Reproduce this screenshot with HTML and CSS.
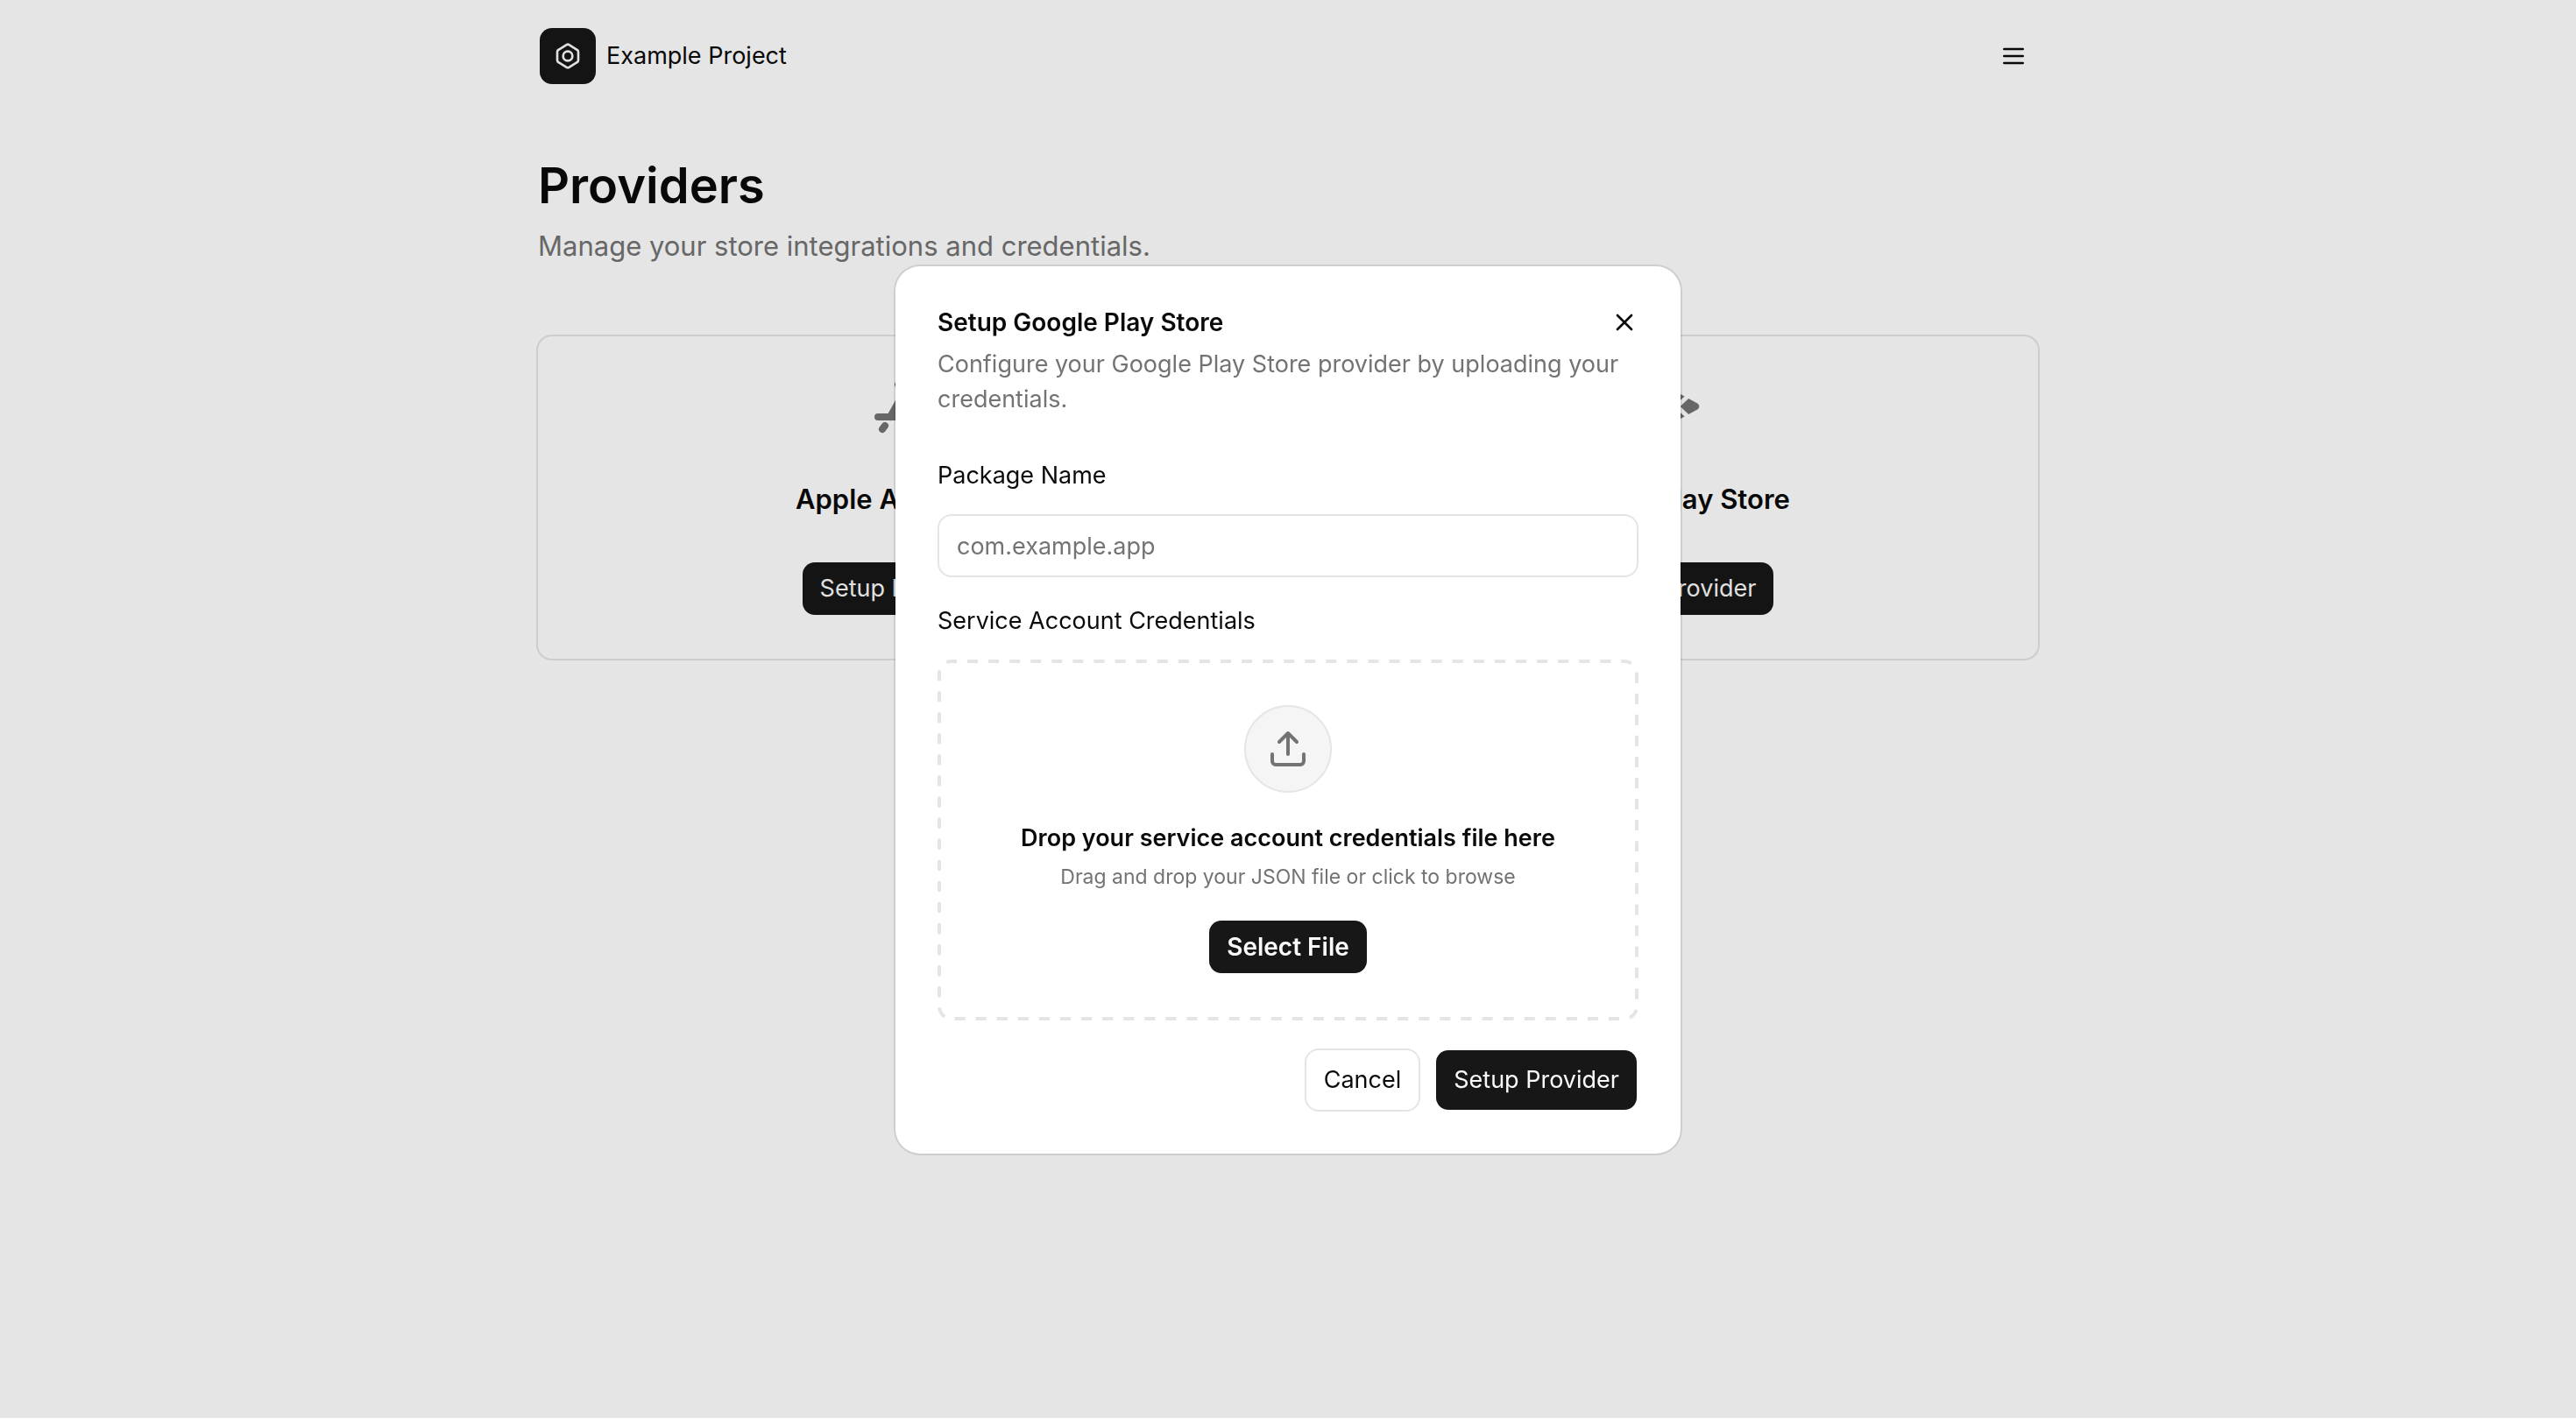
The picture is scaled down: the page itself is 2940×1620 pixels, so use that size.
FILE: index.html
```html
<!DOCTYPE html>
<html lang="en">
<head>
    <meta charset="UTF-8">
    <meta name="viewport" content="width=device-width, initial-scale=1.0">
    <title>Providers - Example Project</title>
    <link rel="stylesheet" href="styles.css">
</head>
<body>
    <div class="page">
        <header class="topbar">
            <a class="brand" href="#">
                <span class="brand-logo">
                    <svg width="32" height="32" viewBox="0 0 24 24" fill="none" stroke="currentColor" stroke-width="2" stroke-linejoin="round">
                        <path d="M19.9 6.6a2 2 0 0 1 1.1 1.8v7.2a2 2 0 0 1-1.1 1.8l-6.8 4.2a2 2 0 0 1-2.1 0l-6.9-4.2A2 2 0 0 1 3 15.6V8.4a2 2 0 0 1 1.1-1.8L11 2.3a2 2 0 0 1 2.1 0z"/>
                        <circle cx="12" cy="12" r="4"/>
                    </svg>
                </span>
                <span>Example Project</span>
            </a>
            <button class="menu-button" aria-label="Menu">
                <svg width="32" height="32" viewBox="0 0 24 24" fill="none" stroke="currentColor" stroke-width="2" stroke-linecap="round">
                    <path d="M4 6h16M4 12h16M4 18h16"/>
                </svg>
            </button>
        </header>

        <main>
            <h1>Providers</h1>
            <p class="subtitle">Manage your store integrations and credentials.</p>

            <!-- one frame around both stores -->
            <div class="providers">
                <section class="provider">
                    <svg class="provider-icon" viewBox="0 0 72 72" fill="none" stroke="currentColor" stroke-width="8" stroke-linecap="round">
                        <path d="M8 48h36M60 48h4M22 48L42 12M31 11l26 47M16 58l-3 4"/>
                    </svg>
                    <h2>Apple App Store</h2>
                    <button class="btn btn-primary btn-small">Setup Provider</button>
                </section>
                <section class="provider">
                    <svg class="provider-icon" viewBox="0 0 512 512" fill="currentColor">
                        <path d="M48 59.5v393a4.3 4.3 0 0 0 7.4 3.1L260 256 55.4 56.4a4.3 4.3 0 0 0-7.4 3.1zM345.8 174L89.2 32.6c-4.6-2.4-8.8 3.5-5.1 7l201.1 192.3zM84.1 472.4c-3.7 3.5.5 9.4 5.1 7L345.8 338l-60.6-58zM449.4 231l-71.7-39.5-67.3 64.5 67.3 64.4 71.7-39.4c19.5-10.8 19.5-39.2 0-50z"/>
                    </svg>
                    <h2>Google Play Store</h2>
                    <button class="btn btn-primary btn-small">Setup Provider</button>
                </section>
            </div>
        </main>
    </div>

    <div class="overlay">
        <form class="modal" role="dialog" aria-labelledby="modal-title">
            <div class="modal-header">
                <h2 id="modal-title">Setup Google Play Store</h2>
                <button type="button" class="close-button" aria-label="Close">
                    <svg width="32" height="32" viewBox="0 0 24 24" fill="none" stroke="currentColor" stroke-width="2" stroke-linecap="round">
                        <path d="M18 6L6 18M6 6l12 12"/>
                    </svg>
                </button>
            </div>
            <p class="modal-text">Configure your Google Play Store provider by uploading your credentials.</p>

            <label for="package-name">Package Name</label>
            <input type="text" id="package-name" placeholder="com.example.app">

            <label for="select-file">Service Account Credentials</label>
            <div class="dropzone">
                <svg class="dropzone-border" aria-hidden="true">
                    <rect x="2" y="2" rx="14" pathLength="2376"/>
                </svg>
                <span class="dropzone-icon">
                    <svg width="48" height="48" viewBox="0 0 24 24" fill="none" stroke="currentColor" stroke-width="2" stroke-linecap="round" stroke-linejoin="round">
                        <path d="M12 3v12M17 8l-5-5-5 5M21 15v4a2 2 0 0 1-2 2H5a2 2 0 0 1-2-2v-4"/>
                    </svg>
                </span>
                <h3>Drop your service account credentials file here</h3>
                <p>Drag and drop your JSON file or click to browse</p>
                <button type="button" id="select-file" class="btn btn-primary btn-small btn-bold">Select File</button>
            </div>

            <div class="modal-footer">
                <button type="button" class="btn btn-outline">Cancel</button>
                <button type="submit" class="btn btn-primary">Setup Provider</button>
            </div>
        </form>
    </div>
</body>
</html>
```
FILE: styles.css
```css
* {
    box-sizing: border-box;
}
body {
    margin: 0;
    min-height: 100vh;
    background-color: #fff;
    color: #0a0a0a;
    font-family: Inter, "Liberation Sans", sans-serif;
    font-size: 27px;
    line-height: 40px;
}
h1, h2, h3, p {
    margin: 0;
}
button, input {
    font: inherit;
    color: inherit;
}
svg {
    display: block;
}

/* page */
.page {
    max-width: 1808px;
    margin: 0 auto;
    padding: 0 48px;
}
.topbar {
    display: flex;
    align-items: center;
    justify-content: space-between;
    height: 128px;
}
.brand {
    display: flex;
    align-items: center;
    gap: 10px;
    color: inherit;
    text-decoration: none;
}
.brand-logo {
    display: grid;
    place-items: center;
    width: 68px;
    height: 68px;
    border: 2px solid transparent;
    border-radius: 16px;
    background-color: #171717;
    background-clip: padding-box;
    color: #fafafa;
}
.menu-button, .close-button {
    padding: 12px;
    border: 0;
    background: none;
}
h1 {
    margin-top: 48px;
    font-size: 56px;
    font-weight: 600;
    line-height: 72px;
}
.subtitle {
    margin-top: 8px;
    font-size: 31px;
    line-height: 50px;
    color: #737373;
}
.providers {
    display: grid;
    grid-template-columns: 1fr 1fr;
    gap: 48px;
    margin-top: 78px;
    border-radius: 16px;
    box-shadow: 0 0 0 2px #e5e5e5;
}
.provider {
    display: flex;
    flex-direction: column;
    align-items: center;
    padding: 44px 48px 48px;
}
.provider-icon {
    width: 72px;
    height: 72px;
    color: #737373;
}
.provider h2 {
    margin: 48px 0;
    font-size: 31px;
    font-weight: 600;
    line-height: 44px;
}

/* buttons */
.btn {
    height: 72px;
    padding: 0 20px;
    border: 2px solid transparent;
    border-radius: 16px;
    white-space: nowrap;
}
.btn-small {
    height: 64px;
}
.btn-bold {
    font-size: 28px;
    font-weight: 600;
}
.btn-primary {
    background-color: #171717;
    background-clip: padding-box;
    color: #fafafa;
}
.btn-outline {
    border-color: #e5e5e5;
    background-color: #fff;
}

/* modal */
.overlay {
    position: fixed;
    inset: 0;
    display: grid;
    place-items: center;
    padding-top: 2px;
    border-bottom: 1px solid #fff;
    background-color: rgba(0, 0, 0, 0.1);
    background-clip: padding-box;
}
.modal {
    width: 100%;
    max-width: 896px;
    padding: 44px 48px 48px;
    border-radius: 28px;
    background-color: #fff;
    box-shadow: 0 0 0 2px rgba(0, 0, 0, 0.1);
}
.modal-header {
    display: flex;
    align-items: center;
    justify-content: space-between;
    height: 40px;
}
.modal-header h2 {
    font-size: 28px;
    font-weight: 600;
}
.close-button {
    margin-right: -12px;
}
.modal-text {
    margin: 8px 0 47px;
    color: #737373;
}
.modal label {
    display: block;
    margin-bottom: 24px;
}
.modal input {
    display: block;
    width: 100%;
    height: 72px;
    margin-bottom: 30px;
    padding: 0 20px;
    border: 2px solid #e5e5e5;
    border-radius: 16px;
    background-color: #fff;
}
.modal input::placeholder {
    color: #737373;
}
.dropzone {
    position: relative;
    display: flex;
    flex-direction: column;
    align-items: center;
    padding: 52px;
}
.dropzone-border {
    position: absolute;
    inset: 0;
    width: 100%;
    height: 100%;
    pointer-events: none;
}
.dropzone-border rect {
    width: calc(100% - 4px);
    height: calc(100% - 4px);
    fill: none;
    stroke: #e5e5e5;
    stroke-width: 4px;
    stroke-dasharray: 12;
    stroke-dashoffset: 6;
}
.dropzone-icon {
    display: grid;
    place-items: center;
    width: 100px;
    height: 100px;
    margin-bottom: 32px;
    border: 2px solid #e5e5e5;
    border-radius: 50%;
    background-color: #f5f5f5;
    color: #737373;
}
.dropzone h3 {
    font-size: 27px;
    font-weight: 600;
}
.dropzone p {
    margin: 8px 0 32px;
    font-size: 23px;
    line-height: 32px;
    color: #737373;
}
.modal-footer {
    display: flex;
    justify-content: flex-end;
    gap: 16px;
    margin-top: 32px;
}
```
